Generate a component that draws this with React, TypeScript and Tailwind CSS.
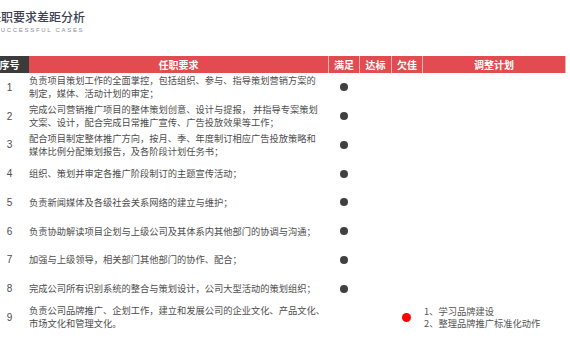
const ROWS: { text: string[]; mark: "ok" | "bad" | null; plan?: string[] }[] = [
  { text: ["负责项目策划工作的全面掌控，包括组织、参与、指导策划营销方案的", "制定，媒体、活动计划的审定；"], mark: "ok" },
  { text: ["完成公司营销推广项目的整体策划创意、设计与提报， 并指导专案策划", "文案、设计，配合完成日常推广宣传、广告投放效果等工作；"], mark: "ok" },
  { text: ["配合项目制定整体推广方向，按月、季、年度制订相应广告投放策略和", "媒体比例分配策划报告，及各阶段计划任务书；"], mark: "ok" },
  { text: ["组织、策划并审定各推广阶段制订的主题宣传活动；"], mark: "ok" },
  { text: ["负责新闻媒体及各级社会关系网络的建立与维护；"], mark: "ok" },
  { text: ["负责协助解读项目企划与上级公司及其体系内其他部门的协调与沟通；"], mark: "ok" },
  { text: ["加强与上级领导，相关部门其他部门的协作、配合；"], mark: "ok" },
  { text: ["完成公司所有识别系统的整合与策划设计，公司大型活动的策划组织；"], mark: "ok" },
  { text: ["负责公司品牌推广、企划工作，建立和发展公司的企业文化、产品文化、", "市场文化和管理文化。"], mark: "bad", plan: ["1、学习品牌建设", "2、整理品牌推广标准化动作"] },
];

const COLS = "grid grid-cols-[39px_299px_31px_32px_31px_144px]";

export default function App() {
  return (
    <div className="h-[360px] w-[570px] overflow-hidden bg-white font-['Noto_Sans_CJK_SC',sans-serif]">
      {/* 标题 */}
      <div className="h-[56px] pt-[9px]">
        <h1 className="ml-[-11px] text-[12px] leading-[16px] font-medium text-[#3d4150]">任职要求差距分析</h1>
        <p className="ml-[-5px] mt-[1px] font-['Liberation_Sans',sans-serif] text-[6px] leading-[8px] tracking-[1.7px] text-[#8a8e99]">SUCCESSFUL CASES</p>
      </div>

      {/* 表头 */}
      <div className={`${COLS} ml-[-10px] h-[17px] text-[10px] font-bold leading-[17px] text-white`}>
        <div className="bg-[#3b3b3b] text-center">序号</div>
        <div className="bg-[#e24b4f] text-center">任职要求</div>
        <div className="border-l border-[#f3b3b4] bg-[#e24b4f] text-center">满足</div>
        <div className="border-l border-[#f3b3b4] bg-[#e24b4f] text-center">达标</div>
        <div className="border-l border-[#f3b3b4] bg-[#e24b4f] text-center">欠佳</div>
        <div className="border-l border-r border-[#f3b3b4] bg-[#e24b4f] text-center">调整计划</div>
      </div>

      {/* 表体 */}
      {ROWS.map((r, i) => (
        <div key={i} className={`${COLS} ml-[-10px] h-[28.75px] items-center text-[#4d4d4d]`}>
          <div className="text-center font-['Liberation_Sans',sans-serif] text-[10px]">{i + 1}</div>
          <div className="text-[9.25px] leading-[13px]">
            {r.text.map((l) => <div key={l} className="whitespace-nowrap">{l}</div>)}
          </div>
          <div className="flex justify-center">
            {r.mark === "ok" && <span className="h-[8px] w-[8px] rounded-full bg-[#404040]" />}
          </div>
          <div />
          <div className="flex justify-center">
            {r.mark === "bad" && <span className="h-[9px] w-[9px] rounded-full bg-[#ff0000]" />}
          </div>
          <div className="pl-[2px] text-[9.25px] leading-[12px] text-[#555]">
            {r.plan?.map((l) => <div key={l} className="whitespace-nowrap">{l}</div>)}
          </div>
        </div>
      ))}
    </div>
  );
}
